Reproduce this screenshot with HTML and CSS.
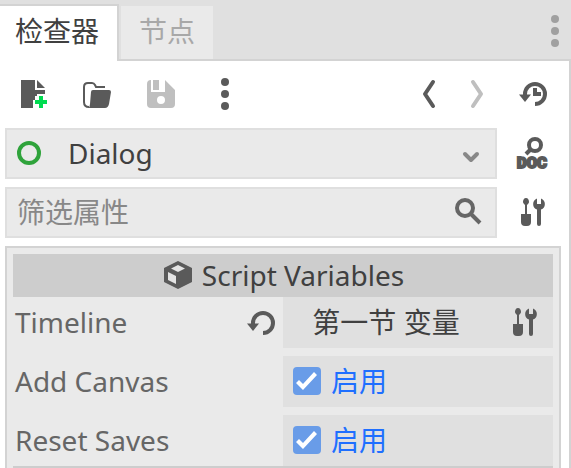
FILE: index.html
```html
<!DOCTYPE html>
<html lang="zh-CN">

<head>
    <meta charset="UTF-8">
    <meta name="viewport" content="width=device-width, initial-scale=1.0">
    <title>检查器</title>
    <link rel="stylesheet" href="styles.css">
</head>

<body>
    <svg class="symbols" aria-hidden="true">
        <symbol id="dots" viewBox="0 0 32 32">
            <circle cx="16" cy="4" r="4" />
            <circle cx="16" cy="16" r="4" />
            <circle cx="16" cy="28" r="4" />
        </symbol>
        <symbol id="tools" viewBox="0 0 32 32">
            <path d="M9 2c2 0 3 2 3 4 0 1-1 2-2 3v9h4v8a4 4 0 0 1-4 4H8a4 4 0 0 1-4-4v-8h4V9C7 8 6 7 6 6c0-2 1-4 3-4z" />
            <path d="M20 2.4V8h4V2.4A6 6 0 0 1 24 13.6V28a2 2 0 0 1-4 0V13.6A6 6 0 0 1 20 2.4z" />
        </symbol>
        <symbol id="reload" viewBox="0 0 32 32">
            <path d="M8 17V16a10 10 0 1 1 10 10" fill="none" stroke="currentColor" stroke-width="4" />
            <path d="M2 16.500h12L8 24z" />
        </symbol>
    </svg>

    <div class="dock">
        <div class="tabs" role="tablist">
            <button class="tab active" role="tab" aria-selected="true">检查器</button>
            <button class="tab" role="tab" aria-selected="false">节点</button>
            <button class="icon-btn dock-menu" aria-label="停靠菜单"><svg class="icon"><use href="#dots" /></svg></button>
        </div>

        <div class="content">
            <div class="toolbar">
                <button class="icon-btn" aria-label="新建资源">
                    <svg class="icon" viewBox="0 0 32 32">
                        <path d="M4 2v28h12v-8h2v-4h2v-2h8v-4H18V2zM20 2v8h8z" />
                        <path d="M22 18h4v4h4v4h-4v4h-4v-4h-4v-4h4z" fill="#00dc50" />
                    </svg>
                </button>
                <button class="icon-btn" aria-label="加载资源">
                    <svg class="icon" viewBox="0 0 32 32">
                        <path d="M8 29C4 29 3 27 3 24V9q0-4 4-4h4q2 0 3 2l1 2h9" fill="none" stroke="currentColor" stroke-width="2" />
                        <path d="M12 12h16q2 0 2 2l-2 12q-1 4-4 4H7q2-1 2-4l1-12q0-2 2-2z" />
                    </svg>
                </button>
                <button class="icon-btn" aria-label="保存资源" disabled>
                    <svg class="icon" viewBox="0 0 32 32">
                        <path fill-rule="evenodd" d="M6 2Q2 2 2 6v20q0 4 4 4h20q4 0 4-4V12L20 2v12H6zM16 18a4 4 0 1 1 0 8 4 4 0 0 1 0-8z" />
                        <path d="M8 2h6v10H8z" />
                    </svg>
                </button>
                <button class="icon-btn" aria-label="更多选项"><svg class="icon"><use href="#dots" /></svg></button>
                <div class="history">
                    <button class="icon-btn" aria-label="后退">
                        <svg class="icon narrow" viewBox="0 0 16 32"><path class="line" d="M12 4L4 16l8 12" /></svg>
                    </button>
                    <button class="icon-btn" aria-label="前进" disabled>
                        <svg class="icon narrow" viewBox="0 0 16 32"><path class="line" d="M4 4l8 12-8 12" /></svg>
                    </button>
                    <button class="icon-btn" aria-label="历史记录">
                        <svg class="icon" viewBox="0 0 32 32">
                            <use href="#reload" />
                            <path d="M16 10h4v4h4v4h-8z" />
                        </svg>
                    </button>
                </div>
            </div>

            <div class="row">
                <div class="field">
                    <svg class="icon ring" viewBox="0 0 32 32"><circle cx="16" cy="16" r="10" /></svg>
                    <select class="object" aria-label="对象">
                        <option>Dialog</option>
                    </select>
                    <svg class="icon muted" viewBox="0 0 32 32"><path class="line" d="M10 17l6 6 6-6" /></svg>
                </div>
                <button class="icon-btn side" aria-label="打开文档">
                    <svg class="icon" viewBox="0 0 32 32">
                        <path d="M14 12l-5 5" fill="none" stroke="currentColor" stroke-width="4" />
                        <circle cx="18" cy="8" r="6" fill="none" stroke="currentColor" stroke-width="4" />
                        <text class="doc" x="15" y="31">DOC</text>
                    </svg>
                </button>
            </div>

            <div class="row">
                <div class="field">
                    <input class="filter" type="text" placeholder="筛选属性" aria-label="筛选属性">
                    <svg class="icon search" viewBox="0 0 32 32">
                        <circle cx="12" cy="12" r="8" />
                        <path d="M17 17l10 10" />
                    </svg>
                </div>
                <button class="icon-btn side" aria-label="属性工具"><svg class="icon"><use href="#tools" /></svg></button>
            </div>

            <div class="inspector">
                <h2 class="category">
                    <svg class="icon" viewBox="0 0 32 32">
                        <path d="M16 2l14 7v14l-14 7-14-7V9z" />
                        <path class="face" d="M16 6l7 3.500-7 3.500-7-3.500zM6 13l8 4v8l-8-4z" />
                    </svg>
                    Script Variables
                </h2>
                <div class="property">
                    <span class="name">Timeline</span>
                    <button class="icon-btn reset" aria-label="重置"><svg class="icon"><use href="#reload" /></svg></button>
                    <div class="value">
                        <button class="timeline">第一节 变量</button>
                        <button class="icon-btn" aria-label="编辑时间轴"><svg class="icon"><use href="#tools" /></svg></button>
                    </div>
                </div>
                <div class="property">
                    <span class="name">Add Canvas</span>
                    <label class="value check"><input type="checkbox" checked>启用</label>
                </div>
                <div class="property">
                    <span class="name">Reset Saves</span>
                    <label class="value check"><input type="checkbox" checked>启用</label>
                </div>
                <div class="category"></div>
            </div>
        </div>
    </div>
</body>

</html>
```

FILE: styles.css
```css
* {
    box-sizing: border-box;
}

body {
    margin: 0;
    font-family: "Noto Sans", "Noto Sans CJK SC", sans-serif;
    font-size: 28px;
    line-height: 40px;
    color: #404040;
    background-color: white;
}

button,
input,
select {
    margin: 0;
    padding: 0;
    border: none;
    background: none;
    font: inherit;
    color: inherit;
}

.symbols {
    display: none;
}

.dock {
    height: 100vh;
    overflow: hidden;
    display: flex;
    flex-direction: column;
}

.icon {
    display: block;
    flex: none;
    width: 32px;
    height: 32px;
    fill: currentColor;
    color: #5a5a5a;
    overflow: visible;
}

.icon.narrow {
    width: 16px;
}

.line {
    fill: none;
    stroke: currentColor;
    stroke-width: 4px;
    stroke-linecap: round;
    stroke-linejoin: round;
}

.icon-btn {
    display: flex;
    align-items: center;
    justify-content: center;
    cursor: pointer;
}

.icon-btn:disabled .icon {
    color: #bfbfbf;
}

/* tabs */
.tabs {
    display: flex;
    flex: none;
    height: 61px;
    padding-top: 4px;
    background: linear-gradient(#d3d3d3, #d3d3d3) bottom / 100% 2px no-repeat #e0e0e0;
}

.tab {
    margin: 2px 0 2px 2px;
    padding: 0 18px 4px;
    background-color: #eaeaea;
    color: #a8a8a8;
}

.tab.active {
    margin: 0;
    padding: 0 18px 6px 15px;
    border-top: 2px solid #d3d3d3;
    border-right: 2px solid #d3d3d3;
    background-color: white;
    color: #404040;
}

.dock-menu {
    margin-left: auto;
    padding-bottom: 4px;
}

.dock-menu .icon {
    color: #a0a0a0;
}

/* toolbar */
.content {
    flex: 1;
    min-height: 0;
    border-right: 2px solid #d3d3d3;
}

.toolbar {
    display: flex;
    gap: 32px;
    height: 67px;
    padding: 0 20px 1px 17px;
}

.history {
    display: flex;
    gap: 32px;
    margin-left: auto;
}

/* object and filter fields */
.row {
    display: flex;
    margin-bottom: 8px;
    padding-left: 5px;
}

.field {
    display: flex;
    flex: 1;
    align-items: center;
    min-width: 0;
    height: 51px;
    padding: 0 8px 1px 0;
    border: 2px solid #dfdfdf;
    background-color: #eaeaea;
}

.side {
    width: 72px;
    padding-bottom: 1px;
}

.ring {
    margin: 0 23px 0 6px;
    fill: none;
    stroke: #2fa33b;
    stroke-width: 4px;
}

.object {
    flex: 1;
    min-width: 0;
    appearance: none;
}

.muted {
    color: #888;
}

.filter {
    flex: 1;
    min-width: 0;
    padding-left: 10px;
}

.filter::placeholder {
    color: #888;
}

.search {
    margin-right: 2px;
    fill: none;
    stroke: #666;
    stroke-width: 4px;
}

.doc {
    font-family: Roboto, sans-serif;
    font-size: 15px;
    font-weight: 900;
    text-anchor: middle;
    stroke: currentColor;
    stroke-width: 2px;
}

/* properties */
.inspector {
    margin: 0 8px 0 5px;
    padding: 6px;
    border: 2px solid #d3d3d3;
    background-color: #eaeaea;
}

.category {
    display: flex;
    align-items: center;
    justify-content: center;
    gap: 8px;
    height: 43px;
    margin: 0;
    padding-bottom: 1px;
    background-color: #cdcdcd;
    font-size: 28px;
    font-weight: normal;
}

.face {
    fill: #e4e4e4;
}

.property {
    display: grid;
    grid-template-columns: 1fr auto 50%;
    align-items: center;
    margin-bottom: 8px;
}

.property:nth-last-child(2) {
    margin-bottom: 0;
}

.name {
    padding: 0 0 1px 2px;
    color: #666;
}

.reset {
    margin-right: 6px;
}

.value {
    grid-column: 3;
    display: flex;
    align-items: center;
    height: 51px;
    padding: 0 12px 1px 0;
    background-color: #e0e0e0;
}

.timeline {
    flex: 1;
    margin-right: 20px;
}

.check {
    gap: 10px;
    padding: 0 10px 1px;
    color: #1f6fff;
}

.check input {
    appearance: none;
    width: 28px;
    height: 28px;
    border-radius: 4px;
    background-color: #bfbfbf;
}

.check input:checked {
    background-color: #699ce8;
}

.check input:checked::before {
    content: "";
    display: block;
    height: 100%;
    background-color: white;
    clip-path: polygon(3px 16px, 6px 13px, 10px 17px, 21px 5px, 24px 8px, 10px 23px);
}
```
